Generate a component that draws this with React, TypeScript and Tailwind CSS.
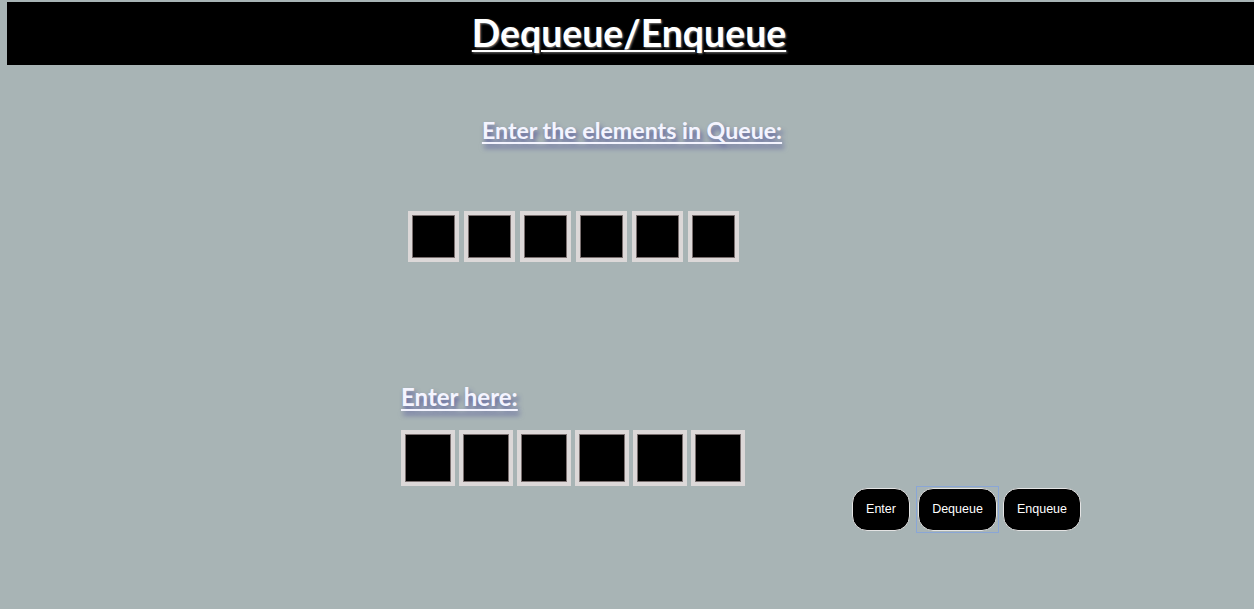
import React from 'react'

const font = { fontFamily: 'Lato, "Open Sans", sans-serif' }

function Cell({ big }: { big?: boolean }) {
    return (
        <div className={big ? "w-[54px] h-[56px] border-[4px] border-[#dcd8d8] bg-[#dcd8d8]" : "w-[51px] h-[51px] border-[4px] border-[#dcd8d8] bg-[#dcd8d8]"}>
            <div className="w-full h-full bg-black border border-[#7a7070]" />
        </div>
    )
}

export default function App() {
    const cells = [0, 1, 2, 3, 4, 5]
    return (
        <div className="w-[1254px] h-[609px] bg-[#a8b4b5] overflow-hidden pt-[2px]" style={font}>
            {/* Header */}
            <div className="ml-[7px] h-[63px] bg-black flex items-center justify-center">
                <h1 className="text-[37.4px] font-bold text-white underline underline-offset-[3px] decoration-2 [text-shadow:1px_1px_2px_rgba(150,150,150,0.8)] -ml-[3px]">
                    Dequeue/Enqueue
                </h1>
            </div>

            {/* Queue display */}
            <div className="mt-[48px] flex justify-center">
                <h2 className="text-[23.2px] font-bold text-[#f4f4ff] underline underline-offset-[3px] [text-shadow:2px_4px_5px_rgba(60,60,150,0.75)] ml-[10px]">
                    Enter the elements in Queue:
                </h2>
            </div>
            <div className="mt-[63px] ml-[408px] flex gap-[5px]">
                {cells.map((i) => <Cell key={i} />)}
            </div>

            {/* Input */}
            <div className="mt-[117px] ml-[401px]">
                <h3 className="text-[24px] font-bold text-[#f4f4ff] underline underline-offset-[3px] [text-shadow:2px_4px_5px_rgba(60,60,150,0.75)]">
                    Enter here:
                </h3>
            </div>
            <div className="mt-[15px] ml-[401px] flex gap-[4px]">
                {cells.map((i) => <Cell key={i} big />)}
            </div>

            {/* Actions */}
            <div className="ml-[852px] flex items-center" style={{ fontFamily: '"Liberation Sans", Arial, sans-serif' }}>
                <button className="w-[58px] h-[43px] rounded-[15px] bg-black text-white text-[12.5px] border border-[#e4e4e4]">Enter</button>
                <div className="ml-[6px] border border-[#8aa6d6] p-[1px]">
                    <button className="block w-[79px] h-[43px] rounded-[15px] bg-black text-white text-[12.5px] border border-[#e4e4e4]">Dequeue</button>
                </div>
                <button className="ml-[4px] w-[78px] h-[43px] rounded-[15px] bg-black text-white text-[12.5px] border border-[#e4e4e4]">Enqueue</button>
            </div>
        </div>
    )
}
